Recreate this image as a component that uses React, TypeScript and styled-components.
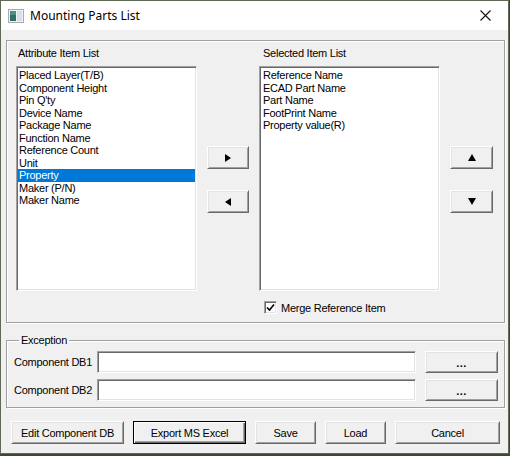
import * as React from "react";
import styled, { createGlobalStyle, css } from "styled-components";

const GlobalStyle = createGlobalStyle`
  html, body {
    margin: 0;
    padding: 0;
    background: #3c4734;
  }
  body {
    width: 510px;
    height: 456px;
    overflow: hidden;
    font-family: "Liberation Sans", Arial, sans-serif;
  }
`;

const Window = styled.div`
  width: 509px;
  height: 454px;
  box-sizing: border-box;
  border: 1px solid #5e6a55;
  background: #f0f0f0;
  display: flex;
  flex-direction: column;
  font-family: "Liberation Sans", Arial, sans-serif;
  font-size: 11px;
  letter-spacing: -0.25px;
  color: #000;
`;

const TitleBar = styled.div`
  height: 29px;
  background: #fff;
  display: flex;
  align-items: center;
  padding-left: 7px;
  padding-right: 8px;
  gap: 6px;
`;

const TitleText = styled.span`
  flex: 1;
  font-family: "Noto Sans", "Liberation Sans", sans-serif;
  font-size: 12px;
  letter-spacing: 0;
  color: #000;
  margin-top: -1px;
`;

const CloseButton = styled.div`
  width: 30px;
  height: 29px;
  display: flex;
  align-items: center;
  justify-content: center;
`;

const Body = styled.div`
  display: flex;
  flex-direction: column;
  padding: 10px 3px 0 5px;
`;

const etched = css`
  border: 1px solid #a0a0a0;
  box-shadow: inset 1px 1px #fff, 1px 1px #fff;
`;

const GroupBox = styled.div`
  ${etched};
  box-sizing: border-box;
  height: 283px;
  display: grid;
  grid-template-columns: 181px 42px 181px 43px;
  grid-template-rows: 25px 225px auto;
  column-gap: 10px;
  padding-left: 9px;
`;

const ListLabel = styled.div<{ $col: number }>`
  grid-column: ${(p) => p.$col};
  grid-row: 1;
  line-height: 25px;
  padding-left: ${(p) => (p.$col === 1 ? 2 : 4)}px;
`;

const sunken = css`
  border: 1px solid;
  border-color: #a0a0a0 #fff #fff #a0a0a0;
  box-shadow: inset 1px 1px #696969, inset -1px -1px #e3e3e3;
  background: #fff;
  box-sizing: border-box;
`;

const ListBox = styled.div<{ $col: number }>`
  ${sunken};
  grid-column: ${(p) => p.$col};
  grid-row: 2;
  padding: 2px 1px 2px 1px;
  overflow: hidden;
`;

const ListItem = styled.div<{ $selected?: boolean; $indent: number }>`
  height: 12.5px;
  line-height: 12.5px;
  padding-left: ${(p) => p.$indent}px;
  white-space: nowrap;
  background: ${(p) => (p.$selected ? "#0078d7" : "transparent")};
  color: ${(p) => (p.$selected ? "#fff" : "#000")};
`;

const ButtonStack = styled.div<{ $col: number }>`
  grid-column: ${(p) => p.$col};
  grid-row: 2;
  display: flex;
  flex-direction: column;
  gap: 21px;
  padding-top: 80px;
`;

const Button = styled.button<{ $w?: number; $h?: number; $default?: boolean }>`
  width: ${(p) => (p.$w ? `${p.$w}px` : "100%")};
  height: ${(p) => p.$h ?? 23}px;
  box-sizing: border-box;
  margin: 0;
  padding: 0;
  background: #f0f0f0;
  font-family: "Liberation Sans", Arial, sans-serif;
  font-size: 11px;
  letter-spacing: -0.25px;
  color: #000;
  display: flex;
  align-items: center;
  justify-content: center;
  ${(p) =>
    p.$default
      ? css`
          border: 1px solid #000;
          box-shadow: inset 1px 1px #fff, inset -1px -1px #696969,
            inset -2px -2px #a0a0a0;
        `
      : css`
          border: 1px solid;
          border-color: #fff #696969 #696969 #fff;
          box-shadow: inset 1px 1px #e3e3e3, inset -1px -1px #a0a0a0;
        `}
`;

const Dots = styled.span`
  font-weight: bold;
  letter-spacing: 0.5px;
  margin-top: 2px;
`;

const CheckRow = styled.label`
  grid-column: 3;
  grid-row: 3;
  display: flex;
  align-items: center;
  gap: 4px;
  margin-top: 10px;
  padding-left: 5px;
  height: 13px;
`;

const CheckBox = styled.span`
  ${sunken};
  width: 13px;
  height: 13px;
  display: flex;
  align-items: center;
  justify-content: center;
`;

const Exception = styled.fieldset`
  ${etched};
  margin: 11px 0 0 0;
  padding: 5px 6px 6px 7px;
  min-inline-size: 0;
  display: flex;
  flex-direction: column;
  gap: 6px;
`;

const Legend = styled.legend`
  margin-left: 5px;
  padding: 0 2px;
  line-height: 12px;
  font-size: 11px;
`;

const FieldRow = styled.div`
  display: flex;
  align-items: center;
  height: 22px;
`;

const FieldLabel = styled.span`
  width: 83px;
`;

const TextBox = styled.div`
  ${sunken};
  width: 319px;
  height: 22px;
  margin-right: 9px;
`;

const ActionRow = styled.div`
  display: flex;
  gap: 9px;
  margin-top: 13px;
  padding-left: 5px;
`;

const Tri = ({ dir }: { dir: "right" | "left" | "up" | "down" }) => {
  const pts = {
    right: "0,0 6,4 0,8",
    left: "6,0 0,4 6,8",
    up: "4,0 8,7 0,7",
    down: "0,0 8,0 4,7",
  }[dir];
  const horiz = dir === "right" || dir === "left";
  return (
    <svg width={horiz ? 6 : 8} height={horiz ? 8 : 7} viewBox={horiz ? "0 0 6 8" : "0 0 8 7"}>
      <polygon points={pts} fill="#000" />
    </svg>
  );
};

const AppIcon = () => (
  <svg width="16" height="14" viewBox="0 0 16 14">
    <rect x="0.5" y="0.5" width="15" height="13" fill="#eef0f2" stroke="#a8acb0" />
    <rect x="2" y="2" width="6" height="10" fill="#2f6f66" />
    <rect x="2" y="2" width="6" height="4" fill="#4f8f83" />
    <rect x="9" y="2" width="5" height="10" fill="#d6e0ea" />
  </svg>
);

const attributeItems = [
  "Placed Layer(T/B)",
  "Component Height",
  "Pin Q'ty",
  "Device Name",
  "Package Name",
  "Function Name",
  "Reference Count",
  "Unit",
  "Property",
  "Maker (P/N)",
  "Maker Name",
];

const selectedItems = [
  "Reference Name",
  "ECAD Part Name",
  "Part Name",
  "FootPrint Name",
  "Property value(R)",
];

export default function App() {
  return (
    <>
      <GlobalStyle />
      <Window>
        <TitleBar>
          <AppIcon />
          <TitleText>Mounting Parts List</TitleText>
          <CloseButton>
            <svg width="11" height="11" viewBox="0 0 11 11">
              <path d="M0.5 0.5 L10.5 10.5 M10.5 0.5 L0.5 10.5" stroke="#111" strokeWidth="1.1" />
            </svg>
          </CloseButton>
        </TitleBar>
        <Body>
          <GroupBox>
            <ListLabel $col={1}>Attribute Item List</ListLabel>
            <ListLabel $col={3}>Selected Item List</ListLabel>
            <ListBox $col={1}>
              {attributeItems.map((t, i) => (
                <ListItem key={t} $indent={1} $selected={i === 8}>
                  {t}
                </ListItem>
              ))}
            </ListBox>
            <ButtonStack $col={2}>
              <Button>
                <Tri dir="right" />
              </Button>
              <Button>
                <Tri dir="left" />
              </Button>
            </ButtonStack>
            <ListBox $col={3}>
              {selectedItems.map((t) => (
                <ListItem key={t} $indent={2}>
                  {t}
                </ListItem>
              ))}
            </ListBox>
            <ButtonStack $col={4}>
              <Button>
                <Tri dir="up" />
              </Button>
              <Button>
                <Tri dir="down" />
              </Button>
            </ButtonStack>
            <CheckRow>
              <CheckBox>
                <svg width="9" height="9" viewBox="0 0 9 9">
                  <path d="M1 4.5 L3.5 7 L8 1.5" stroke="#000" strokeWidth="1.6" fill="none" />
                </svg>
              </CheckBox>
              Merge Reference Item
            </CheckRow>
          </GroupBox>
          <Exception>
            <Legend>Exception</Legend>
            <FieldRow>
              <FieldLabel>Component DB1</FieldLabel>
              <TextBox />
              <Button $w={73} $h={22}>
                <Dots>...</Dots>
              </Button>
            </FieldRow>
            <FieldRow>
              <FieldLabel>Component DB2</FieldLabel>
              <TextBox />
              <Button $w={73} $h={22}>
                <Dots>...</Dots>
              </Button>
            </FieldRow>
          </Exception>
          <ActionRow>
            <Button $w={113}>Edit Component DB</Button>
            <Button $w={113} $default>
              Export MS Excel
            </Button>
            <Button $w={61}>Save</Button>
            <Button $w={61}>Load</Button>
            <Button $w={105}>Cancel</Button>
          </ActionRow>
        </Body>
      </Window>
    </>
  );
}
